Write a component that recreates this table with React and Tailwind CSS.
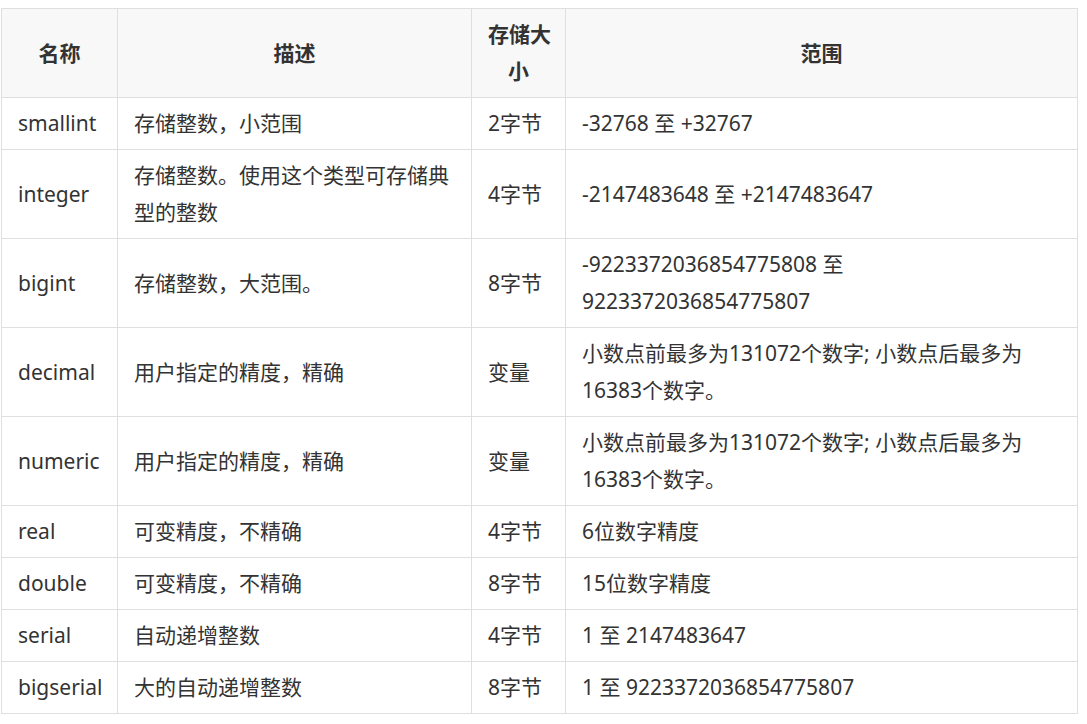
const rows = [
  ['smallint', '存储整数，小范围', '2字节', '-32768 至 +32767'],
  ['integer', '存储整数。使用这个类型可存储典型的整数', '4字节', '-2147483648 至 +2147483647'],
  ['bigint', '存储整数，大范围。', '8字节', '-9223372036854775808 至 9223372036854775807'],
  ['decimal', '用户指定的精度，精确', '变量', '小数点前最多为131072个数字; 小数点后最多为 16383个数字。'],
  ['numeric', '用户指定的精度，精确', '变量', '小数点前最多为131072个数字; 小数点后最多为 16383个数字。'],
  ['real', '可变精度，不精确', '4字节', '6位数字精度'],
  ['double', '可变精度，不精确', '8字节', '15位数字精度'],
  ['serial', '自动递增整数', '4字节', '1 至 2147483647'],
  ['bigserial', '大的自动递增整数', '8字节', '1 至 9223372036854775807'],
];

const cell = 'border border-[#dfdfdf] px-4 py-[7px] align-middle';
const head = cell + ' text-center font-bold whitespace-nowrap';

export default function App() {
  return (
    <div
      className="bg-white pt-2 pl-px text-[21px] leading-[37px] text-[#333]"
      style={{ fontFamily: '"Noto Sans", "Noto Sans CJK SC", sans-serif' }}
    >
      <table className="table-fixed border-collapse w-[1076px]">
        <colgroup>
          <col className="w-[116px]" />
          <col className="w-[354px]" />
          <col className="w-[94px]" />
          <col className="w-[512px]" />
        </colgroup>
        <thead>
          <tr className="bg-[#f8f8f8]">
            <th className={head}>名称</th>
            <th className={head}>描述</th>
            <th className={head}>存储大<br />小</th>
            <th className={head}>范围</th>
          </tr>
        </thead>
        <tbody>
          {rows.map((r) => (
            <tr key={r[0]}>
              <td className={cell}>{r[0]}</td>
              <td className={cell}>{r[1]}</td>
              <td className={cell}>{r[2]}</td>
              <td className={cell}>{r[3]}</td>
            </tr>
          ))}
        </tbody>
      </table>
    </div>
  );
}
